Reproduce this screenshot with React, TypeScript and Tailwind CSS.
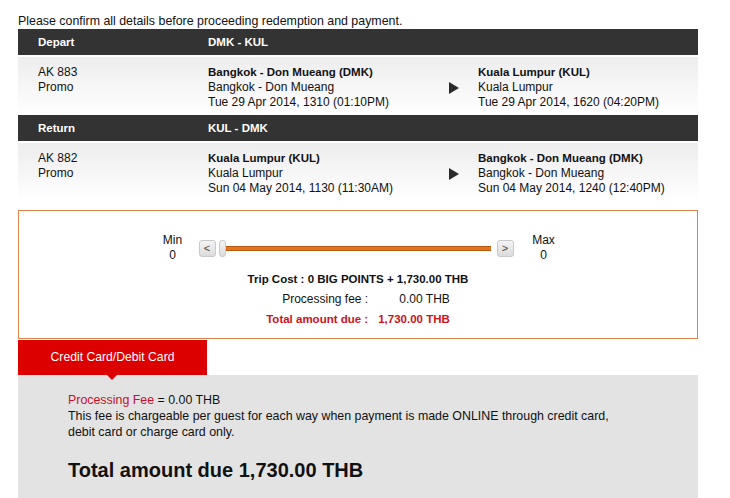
import React from "react";

type Flight = {
    label: string;
    route: string;
    code: string;
    fare: string;
    from: { name: string; city: string; time: string };
    to: { name: string; city: string; time: string };
};

const flights: Flight[] = [
    {
        label: "Depart",
        route: "DMK - KUL",
        code: "AK 883",
        fare: "Promo",
        from: { name: "Bangkok - Don Mueang (DMK)", city: "Bangkok - Don Mueang", time: "Tue 29 Apr 2014, 1310 (01:10PM)" },
        to: { name: "Kuala Lumpur (KUL)", city: "Kuala Lumpur", time: "Tue 29 Apr 2014, 1620 (04:20PM)" },
    },
    {
        label: "Return",
        route: "KUL - DMK",
        code: "AK 882",
        fare: "Promo",
        from: { name: "Kuala Lumpur (KUL)", city: "Kuala Lumpur", time: "Sun 04 May 2014, 1130 (11:30AM)" },
        to: { name: "Bangkok - Don Mueang (DMK)", city: "Bangkok - Don Mueang", time: "Sun 04 May 2014, 1240 (12:40PM)" },
    },
];

const FlightBlock = ({ f }: { f: Flight }) => (
    <div>
        <div className="h-[26px] bg-[#333333] text-white font-bold text-[11.5px] flex items-center pt-[1px]">
            <div className="w-[190px] pl-5">{f.label}</div>
            <div>{f.route}</div>
        </div>
        <div className="h-[2px] bg-white" />
        <div className="h-[58px] bg-gradient-to-b from-[#ededed] to-white flex pt-[8px] leading-[15px]">
            <div className="w-[190px] pl-5">
                <div>{f.code}</div>
                <div>{f.fare}</div>
            </div>
            <div className="w-[240px]">
                <div className="font-bold text-[11.5px]">{f.from.name}</div>
                <div>{f.from.city}</div>
                <div>{f.from.time}</div>
            </div>
            <div className="w-[30px] flex items-center pb-[5px] pl-[1px]">
                <svg width="10" height="12" viewBox="0 0 10 12">
                    <path d="M0 0 L10 6 L0 12 Z" fill="#2b2b2b" />
                </svg>
            </div>
            <div>
                <div className="font-bold text-[11.5px]">{f.to.name}</div>
                <div>{f.to.city}</div>
                <div>{f.to.time}</div>
            </div>
        </div>
    </div>
);

const SlideButton = ({ children }: { children: React.ReactNode }) => (
    <div className="w-[17px] h-[17px] rounded-[3px] border border-[#c9c9c9] bg-gradient-to-b from-[#f4f4f4] to-[#dcdcdc] flex items-center justify-center text-[11px] text-[#444] leading-none">
        {children}
    </div>
);

export default function App() {
    return (
        <div className="w-[730px] h-[498px] overflow-hidden bg-white text-[12px] text-[#111] font-['Liberation_Sans',Arial,sans-serif] pt-[14px]">
            <div className="pl-[18px] leading-[15px] text-[12.4px]">Please confirm all details before proceeding redemption and payment.</div>
            <div className="w-[680px] ml-[18px]">
                <FlightBlock f={flights[0]} />
                <FlightBlock f={flights[1]} />

                <div className="mt-[9px] h-[129px] border border-[#e0834a] flex flex-col items-center pt-[22px] leading-[15px]">
                    <div className="flex items-center">
                        <div className="text-center w-[24px]">
                            <div>Min</div>
                            <div>0</div>
                        </div>
                        <div className="ml-[14px] flex items-center">
                            <SlideButton>&lt;</SlideButton>
                            <div className="ml-[3px] w-[7px] h-[17px] rounded-[3px] border border-[#c9c9c9] bg-gradient-to-b from-[#f4f4f4] to-[#dcdcdc]" />
                            <div className="w-[265px] h-[5px] bg-[#e2761e] border-y border-[#b9590f]" />
                            <div className="ml-[6px]">
                                <SlideButton>&gt;</SlideButton>
                            </div>
                        </div>
                        <div className="ml-[18px] text-center w-[24px]">
                            <div>Max</div>
                            <div>0</div>
                        </div>
                    </div>
                    <div className="mt-[9px] font-bold text-[11.5px]">Trip Cost : 0 BIG POINTS + 1,730.00 THB</div>
                    <table className="mt-[2px] border-collapse">
                        <tbody>
                            <tr className="h-[20px]">
                                <td className="text-right pr-[10px]">Processing fee :</td>
                                <td className="text-right">0.00 THB</td>
                            </tr>
                            <tr className="h-[20px] text-[#d0101a] font-bold text-[11.5px]">
                                <td className="text-right pr-[10px]">Total amount due :</td>
                                <td className="text-right">1,730.00 THB</td>
                            </tr>
                        </tbody>
                    </table>
                </div>

                <div className="mt-[1px] relative w-[189px] h-[35px] bg-[#dc0000] text-white text-[12.2px] flex items-center justify-center">
                    Credit Card/Debit Card
                    <div className="absolute left-[89px] -bottom-[5px] w-0 h-0 border-x-[5px] border-x-transparent border-t-[5px] border-t-[#dc0000]" />
                </div>
                <div className="h-[130px] bg-[#e3e3e3] pl-[50px] pt-[17px] leading-[16px] text-[12.4px]">
                    <div>
                        <span className="text-[#c8102e]">Processing Fee</span> = 0.00 THB
                    </div>
                    <div>This fee is chargeable per guest for each way when payment is made ONLINE through credit card,</div>
                    <div>debit card or charge card only.</div>
                    <div className="mt-[18px] text-[20px] font-bold leading-[24px]">Total amount due 1,730.00 THB</div>
                </div>
            </div>
        </div>
    );
}
